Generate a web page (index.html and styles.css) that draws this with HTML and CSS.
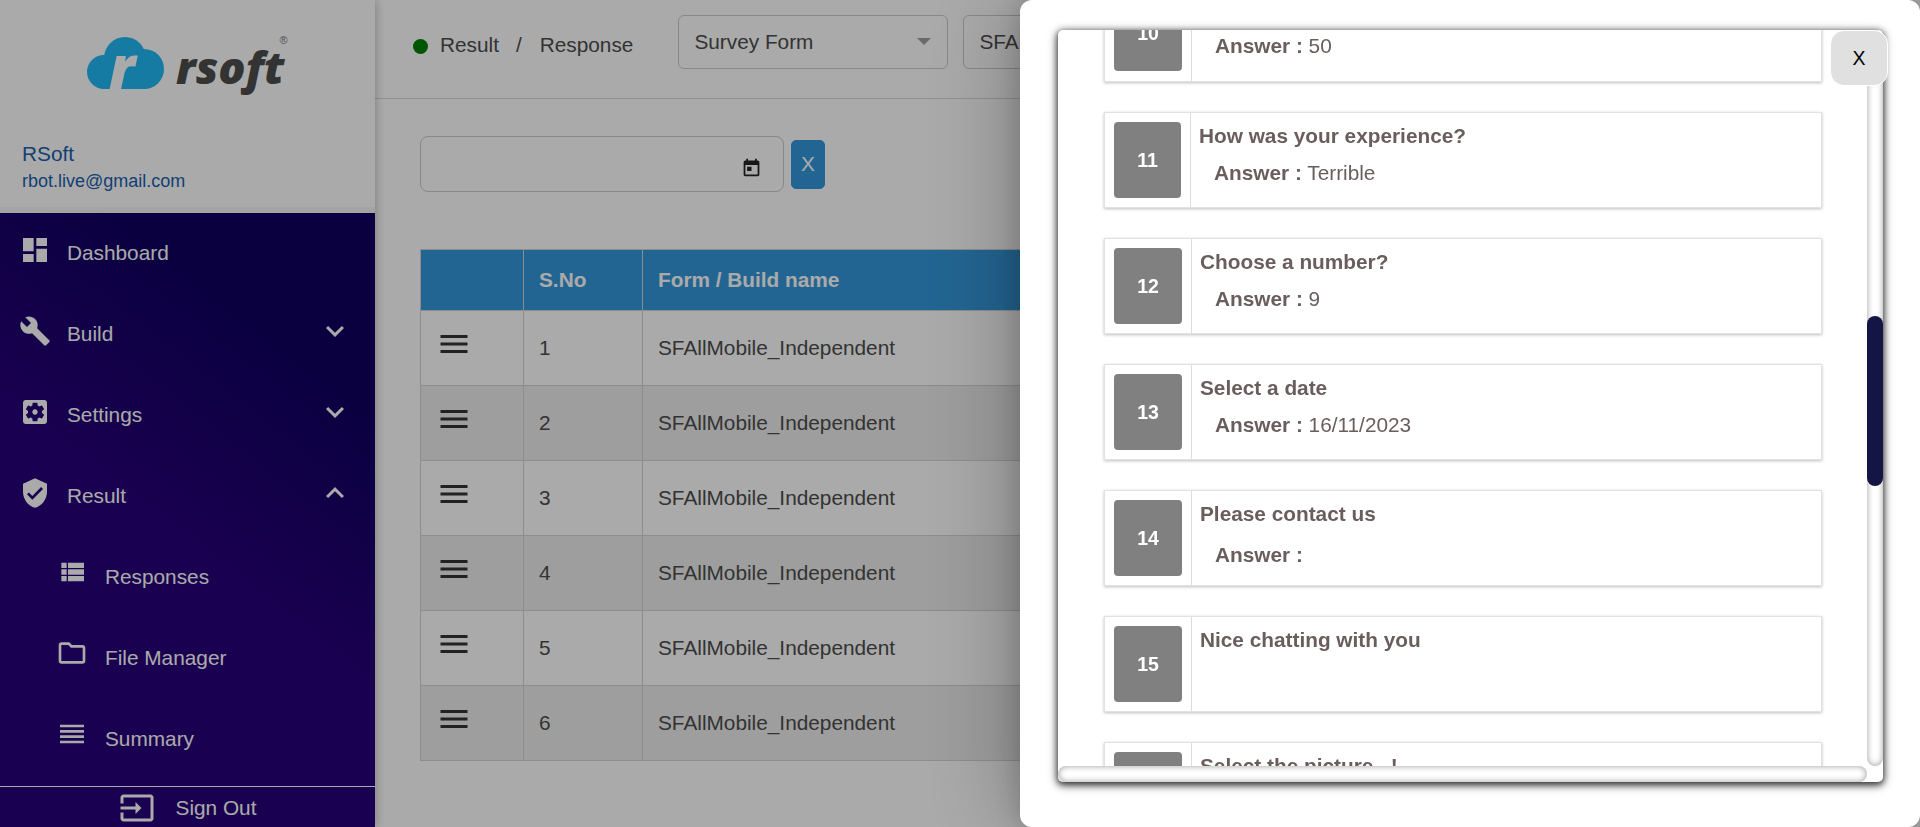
FILE: index.html
```html
<!DOCTYPE html>
<html lang="en">
<head>
  <meta charset="UTF-8">
  <title>Result / Response</title>
  <link rel="stylesheet" href="styles.css">
</head>
<body>

  <!-- Left menu -->
  <aside class="sidebar">
    <div class="side-head">
      <div class="logo">
        <svg class="cloud" viewBox="0 0 77 52" width="77" height="52">
          <circle cx="17" cy="35" r="17"/>
          <circle cx="38" cy="21" r="21"/>
          <circle cx="57" cy="32" r="20"/>
          <rect x="17" y="30" width="41" height="22"/>
          <text class="cloud-r" x="22" y="52">r</text>
        </svg>
        <span class="logo-name">rsoft</span>
        <span class="logo-mark">®</span>
      </div>
      <div class="user-name">RSoft</div>
      <div class="user-mail">rbot.live@gmail.com</div>
    </div>

    <nav class="side-nav">
      <a class="nav-item">
        <svg class="nav-icon" viewBox="0 0 24 24"><path d="M3 13h8V3H3v10zm0 8h8v-6H3v6zm10 0h8V11h-8v10zm0-18v6h8V3h-8z"/></svg>
        <span>Dashboard</span>
      </a>
      <a class="nav-item">
        <svg class="nav-icon" viewBox="0 0 24 24"><path d="M22.7 19l-9.1-9.1c.9-2.3.4-5-1.5-6.9-2-2-5-2.4-7.4-1.3L9 6 6 9 1.6 4.7C.4 7.1.9 10.1 2.9 12.1c1.9 1.9 4.6 2.4 6.9 1.5l9.1 9.1c.4.4 1 .4 1.4 0l2.3-2.3c.5-.4.5-1.1.1-1.4z"/></svg>
        <span>Build</span>
        <svg class="chevron" viewBox="0 0 24 24"><path d="M16.59 8.59L12 13.17 7.41 8.59 6 10l6 6 6-6z"/></svg>
      </a>
      <a class="nav-item">
        <svg class="nav-icon" viewBox="0 0 24 24"><path d="M12 10c-1.1 0-2 .9-2 2s.9 2 2 2 2-.9 2-2-.9-2-2-2zm7-7H5c-1.11 0-2 .9-2 2v14c0 1.1.89 2 2 2h14c1.11 0 2-.9 2-2V5c0-1.1-.89-2-2-2zm-1.75 9c0 .23-.02.46-.05.68l1.48 1.16c.13.11.17.3.08.45l-1.4 2.42c-.09.15-.27.21-.43.15l-1.74-.7c-.36.28-.76.51-1.18.69l-.26 1.85c-.03.17-.18.3-.35.3h-2.8c-.17 0-.32-.13-.35-.29l-.26-1.85c-.43-.18-.82-.41-1.18-.69l-1.74.7c-.16.06-.34 0-.43-.15l-1.4-2.42c-.09-.15-.05-.34.08-.45l1.48-1.16c-.03-.23-.05-.46-.05-.69 0-.23.02-.46.05-.68l-1.48-1.16c-.13-.11-.17-.3-.08-.45l1.4-2.42c.09-.15.27-.21.43-.15l1.74.7c.36-.28.76-.51 1.18-.69l.26-1.85c.03-.17.18-.3.35-.3h2.8c.17 0 .32.13.35.29l.26 1.85c.43.18.82.41 1.18.69l1.74-.7c.16-.06.34 0 .43.15l1.4 2.42c.09.15.05.34-.08.45l-1.48 1.16c.03.23.05.46.05.69z"/></svg>
        <span>Settings</span>
        <svg class="chevron" viewBox="0 0 24 24"><path d="M16.59 8.59L12 13.17 7.41 8.59 6 10l6 6 6-6z"/></svg>
      </a>
      <a class="nav-item">
        <svg class="nav-icon" viewBox="0 0 24 24"><path d="M12 1L3 5v6c0 5.55 3.84 10.74 9 12 5.16-1.26 9-6.45 9-12V5l-9-4zm-2 16l-4-4 1.41-1.41L10 14.17l6.59-6.59L18 9l-8 8z"/></svg>
        <span>Result</span>
        <svg class="chevron" viewBox="0 0 24 24"><path d="M12 8l-6 6 1.41 1.41L12 10.83l4.59 4.58L18 14z"/></svg>
      </a>
      <a class="nav-item nav-sub">
        <svg class="nav-icon" viewBox="0 0 24 24"><path d="M4 14h4v-4H4v4zm0 5h4v-4H4v4zM4 9h4V5H4v4zm5 5h12v-4H9v4zm0 5h12v-4H9v4zM9 5v4h12V5H9z"/></svg>
        <span>Responses</span>
      </a>
      <a class="nav-item nav-sub">
        <svg class="nav-icon" viewBox="0 0 24 24"><path d="M9.17 6l2 2H20v10H4V6h5.17M10 4H4c-1.1 0-1.99.9-1.99 2L2 18c0 1.1.9 2 2 2h16c1.1 0 2-.9 2-2V8c0-1.1-.9-2-2-2h-8l-2-2z"/></svg>
        <span>File Manager</span>
      </a>
      <a class="nav-item nav-sub">
        <svg class="nav-icon" viewBox="0 0 24 24"><path d="M3 15h18v-2H3v2zm0 4h18v-2H3v2zm0-8h18V9H3v2zm0-6v2h18V5H3z"/></svg>
        <span>Summary</span>
      </a>
      <a class="sign-out">
        <svg class="sign-icon" viewBox="0 0 24 24"><path d="M21 3.01H3c-1.1 0-2 .9-2 2V9h2V4.99h18v14.03H3V15H1v4.01c0 1.1.9 1.98 2 1.98h18c1.1 0 2-.88 2-1.98v-14c0-1.11-.9-2-2-2zM11 16l4-4-4-4v3H1v2h10v3z"/></svg>
        <span>Sign Out</span>
      </a>
    </nav>
  </aside>

  <!-- Main page, behind the drawer -->
  <main class="content">
    <header class="topbar">
      <span class="dot"></span>
      <span class="crumb">Result</span>
      <span class="crumb-sep">/</span>
      <span class="crumb">Response</span>
      <div class="select select-form"><span>Survey Form</span><i class="caret"></i></div>
      <div class="select select-build"><span>SFAllMobile_Independent</span></div>
    </header>

    <div class="filter">
      <div class="date-input">
        <svg class="date-icon" viewBox="0 0 24 24"><path d="M19 4h-1V2h-2v2H8V2H6v2H5c-1.1 0-2 .9-2 2v14c0 1.1.9 2 2 2h14c1.1 0 2-.9 2-2V6c0-1.1-.9-2-2-2zm0 16H5V9h14zM7 11h5v5H7z"/></svg>
      </div>
      <button class="clear-btn">X</button>
    </div>

    <table class="results">
      <thead>
        <tr><th class="col-menu"></th><th class="col-no">S.No</th><th>Form / Build name</th></tr>
      </thead>
      <tbody>
        <tr><td><svg class="menu-icon" viewBox="0 0 24 24"><path d="M3 18h18v-2H3v2zm0-5h18v-2H3v2zm0-7v2h18V6H3z"/></svg></td><td>1</td><td>SFAllMobile_Independent</td></tr>
        <tr><td><svg class="menu-icon" viewBox="0 0 24 24"><path d="M3 18h18v-2H3v2zm0-5h18v-2H3v2zm0-7v2h18V6H3z"/></svg></td><td>2</td><td>SFAllMobile_Independent</td></tr>
        <tr><td><svg class="menu-icon" viewBox="0 0 24 24"><path d="M3 18h18v-2H3v2zm0-5h18v-2H3v2zm0-7v2h18V6H3z"/></svg></td><td>3</td><td>SFAllMobile_Independent</td></tr>
        <tr><td><svg class="menu-icon" viewBox="0 0 24 24"><path d="M3 18h18v-2H3v2zm0-5h18v-2H3v2zm0-7v2h18V6H3z"/></svg></td><td>4</td><td>SFAllMobile_Independent</td></tr>
        <tr><td><svg class="menu-icon" viewBox="0 0 24 24"><path d="M3 18h18v-2H3v2zm0-5h18v-2H3v2zm0-7v2h18V6H3z"/></svg></td><td>5</td><td>SFAllMobile_Independent</td></tr>
        <tr><td><svg class="menu-icon" viewBox="0 0 24 24"><path d="M3 18h18v-2H3v2zm0-5h18v-2H3v2zm0-7v2h18V6H3z"/></svg></td><td>6</td><td>SFAllMobile_Independent</td></tr>
      </tbody>
    </table>
  </main>

  <div class="backdrop"></div>

  <!-- Drawer with the answers of one response -->
  <section class="drawer">
    <button class="close-btn">X</button>
    <div class="answers">
      <div class="answers-list">
        <div class="card">
          <div class="card-no"><span class="no-box">10</span></div>
          <div class="card-body">
            <div class="question">&nbsp;</div>
            <div class="answer"><b>Answer :</b> 50</div>
          </div>
        </div>
        <div class="card card-tight">
          <div class="card-no"><span class="no-box">11</span></div>
          <div class="card-body">
            <div class="question">How was your experience?</div>
            <div class="answer"><b>Answer :</b> Terrible</div>
          </div>
        </div>
        <div class="card">
          <div class="card-no"><span class="no-box">12</span></div>
          <div class="card-body">
            <div class="question">Choose a number?</div>
            <div class="answer"><b>Answer :</b> 9</div>
          </div>
        </div>
        <div class="card">
          <div class="card-no"><span class="no-box">13</span></div>
          <div class="card-body">
            <div class="question">Select a date</div>
            <div class="answer"><b>Answer :</b> 16/11/2023</div>
          </div>
        </div>
        <div class="card">
          <div class="card-no"><span class="no-box">14</span></div>
          <div class="card-body">
            <div class="question">Please contact us</div>
            <div class="answer answer-empty"><b>Answer :</b></div>
          </div>
        </div>
        <div class="card">
          <div class="card-no"><span class="no-box">15</span></div>
          <div class="card-body">
            <div class="question">Nice chatting with you</div>
          </div>
        </div>
        <div class="card">
          <div class="card-no"><span class="no-box">16</span></div>
          <div class="card-body">
            <div class="question">Select the picture ..!</div>
          </div>
        </div>
      </div>
      <!-- Scrollbars of the list -->
      <div class="bar-v"><div class="bar-thumb"></div></div>
      <div class="bar-h"></div>
    </div>
  </section>

</body>
</html>
```

FILE: styles.css
```css
/* Base */
* {
  box-sizing: border-box;
}

html, body {
  margin: 0;
  height: 100%;
}

body {
  display: flex;
  height: 827px;
  overflow: hidden;
  font-family: "Liberation Sans", Arial, sans-serif;
  font-size: 20.8px;
  color: #4d4d4d;
  background: #fff;
}

/* Left menu */
.sidebar {
  width: 375px;
  flex-shrink: 0;
  display: flex;
  flex-direction: column;
  box-shadow: 2px 0 8px rgba(0, 0, 0, 0.2);
  z-index: 1;
}

.side-head {
  height: 213px;
  padding: 30px 0 0 22px;
  background: #fff;
  border-bottom: 6px solid #f6f6f6;
}

.logo {
  display: flex;
  height: 72px;
  padding-left: 65px;
  align-items: flex-start;
}

.cloud {
  margin-top: 7px;
  fill: #22b9f3;
  flex-shrink: 0;
}

.cloud-r {
  font-family: "Open Sans", sans-serif;
  font-size: 60px;
  font-weight: 800;
  font-style: italic;
  fill: #fff;
}

.logo-name {
  margin: 7px 0 0 12px;
  font-family: "Open Sans", sans-serif;
  font-size: 45px;
  line-height: 60px;
  font-weight: 800;
  font-style: italic;
  color: #4d4d4d;
}

.logo-mark {
  margin: 4px 0 0 -5px;
  font-size: 11px;
  color: #777;
}

.user-name {
  margin-top: 39px;
  line-height: 26px;
  color: #1b5fae;
}

.user-mail {
  margin-top: 3px;
  font-size: 18px;
  line-height: 22px;
  color: #1b5fae;
}

.side-nav {
  flex: 1;
  display: flex;
  flex-direction: column;
  background: linear-gradient(218deg, #0f0060 0%, #0f0060 22%, #260078 52%, #260078 100%);
}

.nav-item {
  display: flex;
  align-items: center;
  height: 81px;
  padding: 1px 22px 2px 19px;
  color: #fff;
}

.nav-item span {
  margin-left: 16px;
}

.nav-icon {
  width: 32px;
  height: 32px;
  margin-bottom: 7px;
  fill: #fff;
  flex-shrink: 0;
}

.nav-sub {
  padding-left: 56px;
}

.nav-sub .nav-icon {
  margin-bottom: 10px;
}

.nav-sub span {
  margin-left: 17px;
}

.chevron {
  width: 36px;
  height: 36px;
  margin-left: auto;
  margin-bottom: 6px;
  fill: #fff;
}

.sign-out {
  margin-top: auto;
  height: 41px;
  display: flex;
  align-items: center;
  justify-content: center;
  border-top: 1px solid #fff;
  padding-top: 2px;
  color: #fff;
}

.sign-icon {
  width: 36px;
  height: 36px;
  margin-right: 21px;
  fill: #fff;
}

/* Main page */
.content {
  flex: 1;
  min-width: 0;
  overflow: hidden;
}

.topbar {
  display: flex;
  align-items: flex-start;
  height: 99px;
  padding: 15px 0 0 38px;
  border-bottom: 1px solid #d8d8d8;
  white-space: nowrap;
}

.dot {
  width: 15px;
  height: 15px;
  margin: 24px 12px 0 0;
  border-radius: 50%;
  background: green;
  flex-shrink: 0;
}

.crumb, .crumb-sep {
  margin-top: 18px;
  line-height: 24px;
}

.crumb-sep {
  margin-left: 17px;
  margin-right: 18px;
}

.select {
  display: flex;
  align-items: center;
  height: 54px;
  padding: 0 15px 1px;
  border: 1px solid #ccc;
  border-radius: 6px;
  flex-shrink: 0;
}

.select-form {
  width: 270px;
  margin-left: 45px;
}

.select-build {
  width: 270px;
  margin-left: 15px;
}

.caret {
  margin-left: auto;
  margin-right: 1px;
  border-left: 7px solid transparent;
  border-right: 7px solid transparent;
  border-top: 7px solid #a0a0a0;
}

.filter {
  display: flex;
  align-items: center;
  margin: 37px 0 0 45px;
}

.date-input {
  width: 364px;
  height: 56px;
  padding: 0 21px 0 0;
  display: flex;
  align-items: center;
  justify-content: flex-end;
  border: 1px solid #ccc;
  border-radius: 8px;
}

.date-icon {
  width: 21px;
  height: 21px;
  margin-top: 6px;
  fill: #222;
}

.clear-btn {
  width: 34px;
  height: 49px;
  margin-left: 7px;
  padding: 0;
  border: 1px solid #3498db;
  border-radius: 5px;
  background: #3498db;
  color: #fff;
  font-family: inherit;
  font-size: 20.8px;
}

.results {
  width: 1460px;
  margin: 57px 0 0 45px;
  border-collapse: collapse;
  table-layout: fixed;
}

.results th, .results td {
  border: 1px solid #d4d4d4;
  padding: 0 15px;
  text-align: left;
}

.results th {
  height: 61px;
  background: #3498db;
  color: #fff;
  font-weight: bold;
}

.results td {
  height: 75px;
}

.results tbody tr:nth-child(even) td {
  background: #ededed;
}

.col-menu {
  width: 103px;
}

.col-no {
  width: 119px;
}

.results td:first-child {
  padding: 0 0 8px 15px;
}

.menu-icon {
  display: block;
  width: 36px;
  height: 36px;
  fill: #333;
}

/* Dark layer over the page */
.backdrop {
  position: fixed;
  inset: 0;
  z-index: 2;
  background: rgba(0, 0, 0, 0.333);
}

/* Drawer */
.drawer {
  position: fixed;
  top: 0;
  right: 0;
  bottom: 0;
  width: 900px;
  z-index: 3;
  padding: 30px 37px 45px 38px;
  background: #fff;
  border-radius: 12px;
  box-shadow: 0 0 30px rgba(0, 0, 0, 0.2), -10px 0 90px rgba(0, 0, 0, 0.25);
}

.close-btn {
  position: absolute;
  top: 30px;
  left: 810px;
  width: 58px;
  height: 56px;
  z-index: 1;
  border: 1px solid #fff;
  border-radius: 14px;
  background: #e0e0e0;
  color: #000;
  font-family: inherit;
  font-size: 19.5px;
}

.answers {
  position: relative;
  height: 100%;
  border-radius: 5px;
  box-shadow: 0 2px 7px 1px rgba(0, 0, 0, 0.8), 0 3px 14px rgba(0, 0, 0, 0.2);
}

.answers-list {
  height: calc(100% - 16px);
  overflow: hidden;
  padding-left: 46px;
}

.bar-v {
  position: absolute;
  top: 0;
  right: 0;
  bottom: 16px;
  width: 16px;
  border-radius: 10px;
  box-shadow: inset 0 0 6px rgba(0, 0, 0, 0.4);
}

.bar-thumb {
  height: 170px;
  margin-top: 286px;
  border-radius: 10px;
  background: #141445;
}

.bar-h {
  position: absolute;
  left: 0;
  right: 16px;
  bottom: 0;
  height: 16px;
  border-radius: 10px;
  box-shadow: inset 0 0 6px rgba(0, 0, 0, 0.4);
}

.card {
  display: flex;
  width: 718px;
  height: 96px;
  margin-bottom: 30px;
  border: 1px solid #e2e2e2;
  box-shadow: 0 1px 3px rgba(0, 0, 0, 0.25);
  color: #6a5d5d;
}

/* The list is scrolled: the first card is cut by the top edge */
.card:first-child {
  height: 97px;
  margin-top: -45px;
}

.card-no {
  width: 87px;
  flex-shrink: 0;
  padding: 9px 0 0 9px;
  border-right: 1px solid #dcdcdc;
}

.no-box {
  display: flex;
  align-items: center;
  justify-content: center;
  width: 68px;
  height: 76px;
  border-radius: 4px;
  background: #808080;
  color: #fff;
  font-size: 19.5px;
  font-weight: bold;
}

.card-body {
  padding: 11px 0 0 8px;
}

.question {
  font-weight: bold;
  line-height: 24px;
}

.answer {
  margin-top: 13px;
  padding-left: 15px;
  line-height: 24px;
}

.answer-empty {
  margin-top: 17px;
}

.card-tight .card-no {
  width: 86px;
}

.card-tight .no-box {
  width: 67px;
}
```
